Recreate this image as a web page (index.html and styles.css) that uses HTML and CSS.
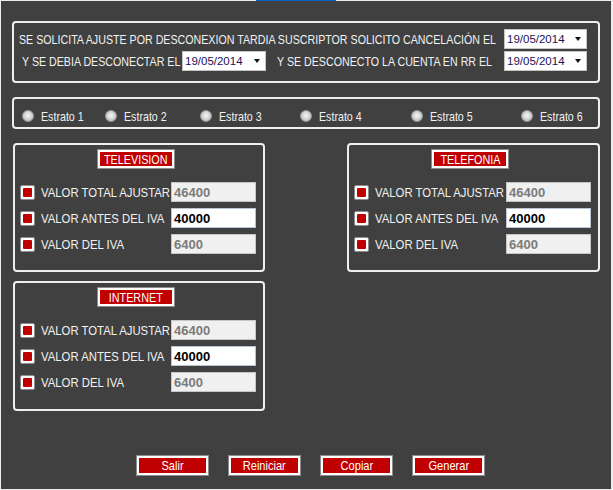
FILE: index.html
```html
<!DOCTYPE html>
<html lang="es">
<head>
<meta charset="utf-8">
<title>Ajuste por desconexión</title>
<link rel="stylesheet" href="styles.css">
</head>
<body>
<div class="topline"><span class="tab"></span></div>
<div class="window">
  <section class="group header">
    <div class="hrow">
      <span class="txt t0"><span class="nar">SE SOLICITA AJUSTE POR DESCONEXION TARDIA SUSCRIPTOR SOLICITO CANCELACIÓN EL</span></span>
      <span class="date push"><span class="dv">19/05/2014</span><span class="arrow"></span></span>
    </div>
    <div class="hrow r2">
      <span class="txt t1"><span class="nar">Y SE DEBIA DESCONECTAR EL</span></span>
      <span class="date d2"><span class="dv">19/05/2014</span><span class="arrow"></span></span>
      <span class="txt t2"><span class="nar">Y SE DESCONECTO LA CUENTA EN RR EL</span></span>
      <span class="date push"><span class="dv">19/05/2014</span><span class="arrow"></span></span>
    </div>
  </section>

  <section class="group radios">
    <label class="radio"><span class="dot"></span><span class="nar">Estrato 1</span></label>
    <label class="radio"><span class="dot"></span><span class="nar">Estrato 2</span></label>
    <label class="radio"><span class="dot"></span><span class="nar">Estrato 3</span></label>
    <label class="radio"><span class="dot"></span><span class="nar">Estrato 4</span></label>
    <label class="radio"><span class="dot"></span><span class="nar">Estrato 5</span></label>
    <label class="radio"><span class="dot"></span><span class="nar">Estrato 6</span></label>
  </section>

  <div class="boxrow">
    <section class="group svc">
      <div class="title"><span class="nar c">TELEVISION</span></div>
      <div class="frow"><span class="chk"><i></i></span><span class="lbl"><span class="nar">VALOR TOTAL AJUSTAR</span></span><span class="field off">46400</span></div>
      <div class="frow"><span class="chk"><i></i></span><span class="lbl"><span class="nar">VALOR ANTES DEL IVA</span></span><span class="field on">40000</span></div>
      <div class="frow"><span class="chk"><i></i></span><span class="lbl"><span class="nar">VALOR DEL IVA</span></span><span class="field off">6400</span></div>
    </section>
    <section class="group svc tel">
      <div class="title"><span class="nar c">TELEFONIA</span></div>
      <div class="frow"><span class="chk"><i></i></span><span class="lbl"><span class="nar">VALOR TOTAL AJUSTAR</span></span><span class="field off">46400</span></div>
      <div class="frow"><span class="chk"><i></i></span><span class="lbl"><span class="nar">VALOR ANTES DEL IVA</span></span><span class="field on">40000</span></div>
      <div class="frow"><span class="chk"><i></i></span><span class="lbl"><span class="nar">VALOR DEL IVA</span></span><span class="field off">6400</span></div>
    </section>
  </div>

  <div class="boxrow second">
    <section class="group svc">
      <div class="title"><span class="nar c">INTERNET</span></div>
      <div class="frow"><span class="chk"><i></i></span><span class="lbl"><span class="nar">VALOR TOTAL AJUSTAR</span></span><span class="field off">46400</span></div>
      <div class="frow"><span class="chk"><i></i></span><span class="lbl"><span class="nar">VALOR ANTES DEL IVA</span></span><span class="field on">40000</span></div>
      <div class="frow"><span class="chk"><i></i></span><span class="lbl"><span class="nar">VALOR DEL IVA</span></span><span class="field off">6400</span></div>
    </section>
  </div>

  <div class="buttons">
    <button class="btn"><span class="nar c">Salir</span></button>
    <button class="btn"><span class="nar c">Reiniciar</span></button>
    <button class="btn"><span class="nar c">Copiar</span></button>
    <button class="btn"><span class="nar c">Generar</span></button>
  </div>
</div>
</body>
</html>
```

FILE: styles.css
```css
* { box-sizing: border-box; }

html, body {
  margin: 0;
  padding: 0;
}

body {
  background: #ececec;
  width: 613px;
  height: 490px;
  overflow: hidden;
  font-family: "Liberation Sans", Arial, sans-serif;
  font-size: 13px;
  color: #f2f2f2;
}

/* Arial Narrow look: Liberation Sans condensed horizontally */
.nar {
  display: inline-block;
  white-space: nowrap;
  transform: scaleX(0.82);
  transform-origin: left center;
}

.nar.c { transform-origin: center center; }

.topline {
  height: 1px;
  display: flex;
}

.tab {
  margin-left: 256px;
  width: 80px;
  height: 1px;
  background: #0a64c8;
}

.window {
  margin-left: 1px;
  width: 610px;
  height: 488px;
  background: #404040;
  padding: 20px 11px 0 11px;
}

.group {
  border: 2px solid #eeeeee;
  border-radius: 4px;
}

/* header */
.header {
  width: 588px;
  height: 62px;
  padding: 6px 11px 0 5px;
  display: flex;
  flex-direction: column;
  gap: 2px;
}

.hrow {
  display: flex;
  align-items: center;
  height: 20px;
  white-space: nowrap;
}

.hrow.r2 { padding-left: 3px; }

.txt { flex: none; }

.t0 { width: 480px; }

.t1 { width: 160px; }

.t2 { margin-left: 11px; width: 220px; }

.date {
  flex: none;
  width: 83px;
  height: 20px;
  background: #fff;
  border: 1px solid #c4c4c4;
  display: flex;
  align-items: center;
  padding-left: 2px;
  font-size: 11.5px;
  color: #1c1058;
}

.date.d2 { width: 84px; }

.push { margin-left: auto; }

.dv { flex: 1; }

.arrow {
  width: 0;
  height: 0;
  border-left: 3.5px solid transparent;
  border-right: 3.5px solid transparent;
  border-top: 4px solid #111;
  margin-right: 5px;
}

/* radios */
.radios {
  margin-top: 14px;
  width: 588px;
  height: 32px;
  padding: 11px 0 0 8px;
  display: grid;
  grid-template-columns: 83px 95px 100px 111px 110px auto;
  align-items: start;
}

.radio {
  display: flex;
  align-items: center;
  height: 12px;
  font-size: 13px;
  white-space: nowrap;
}

.dot {
  width: 12px;
  height: 12px;
  border-radius: 50%;
  border: 1px solid #9a9a9a;
  background: radial-gradient(circle at 50% 45%, #f6f6f6 0%, #d6d6d6 45%, #a9a9a9 100%);
  margin-right: 7px;
  flex: none;
}

/* service boxes */
.boxrow {
  margin-top: 14px;
  margin-left: 1px;
  display: flex;
  justify-content: space-between;
  width: 587px;
}

.boxrow.second { margin-top: 9px; }

.svc {
  width: 252px;
  height: 129px;
  padding: 5px 7px 0 5px;
  display: flex;
  flex-direction: column;
}

.second .svc { height: 130px; }

.svc.tel { width: 253px; }

.title {
  margin-left: 78px;
  width: 76px;
  height: 18px;
  background: #c00000;
  border: 2px solid #fff;
  box-shadow: 0 0 0 1px #8c8c8c;
  color: #fff;
  font-size: 13.5px;
  display: flex;
  align-items: center;
  justify-content: center;
}

.title .nar { transform: scaleX(0.8); }

.frow {
  display: flex;
  align-items: center;
  height: 20px;
  margin-top: 6px;
}

.title + .frow { margin-top: 14px; }

.chk {
  width: 15px;
  height: 15px;
  flex: none;
  border: 1px solid #8e8e8e;
  border-radius: 2px;
  background: #fff;
  padding: 2px;
  display: flex;
}

.chk i {
  flex: 1;
  background: #c00000;
  border-radius: 1px;
}

.lbl {
  flex: 1 1 0;
  min-width: 0;
  margin-left: 6px;
  white-space: nowrap;
  font-size: 13.5px;
  overflow: visible;
}

.lbl .nar { transform: scaleX(0.84); }

.field {
  width: 85px;
  height: 20px;
  flex: none;
  border: 1px solid #c6c6c6;
  padding-left: 2px;
  display: flex;
  align-items: center;
  font-weight: bold;
  font-size: 13px;
}

.field.off { background: #f0f0f0; color: #7b7b7b; }
.field.on { background: #fff; color: #000; border-color: #b8c4d4; }

/* buttons */
.buttons {
  margin-top: 45px;
  padding-left: 125px;
  display: flex;
  gap: 21px;
}

.btn {
  width: 71px;
  height: 19px;
  background: #c00000;
  border: 2px solid #fff;
  box-shadow: 0 0 0 1px #8c8c8c;
  color: #fff;
  font-family: "Liberation Sans", Arial, sans-serif;
  font-size: 13.5px;
  padding: 0;
  display: flex;
  align-items: center;
  justify-content: center;
}
```
